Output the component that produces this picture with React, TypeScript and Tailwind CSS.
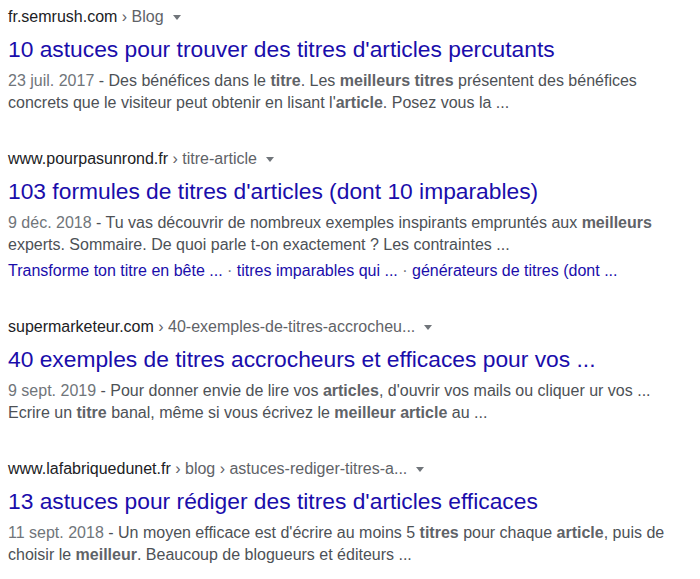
import React from "react";

type Part = string | { b: string };

type Result = {
  site: string;
  crumbs: string;
  title: string;
  date: string;
  lines: Part[][];
  links?: string[];
};

const results: Result[] = [
  {
    site: "fr.semrush.com",
    crumbs: " › Blog",
    title: "10 astuces pour trouver des titres d'articles percutants",
    date: "23 juil. 2017",
    lines: [
      [" - Des bénéfices dans le ", { b: "titre" }, ". Les ", { b: "meilleurs titres" }, " présentent des bénéfices"],
      ["concrets que le visiteur peut obtenir en lisant l'", { b: "article" }, ". Posez vous la ..."],
    ],
  },
  {
    site: "www.pourpasunrond.fr",
    crumbs: " › titre-article",
    title: "103 formules de titres d'articles (dont 10 imparables)",
    date: "9 déc. 2018",
    lines: [
      [" - Tu vas découvrir de nombreux exemples inspirants empruntés aux ", { b: "meilleurs" }],
      ["experts. Sommaire. De quoi parle t-on exactement ? Les contraintes ..."],
    ],
    links: ["Transforme ton titre en bête ...", "titres imparables qui ...", "générateurs de titres (dont ..."],
  },
  {
    site: "supermarketeur.com",
    crumbs: " › 40-exemples-de-titres-accrocheu...",
    title: "40 exemples de titres accrocheurs et efficaces pour vos ...",
    date: "9 sept. 2019",
    lines: [
      [" - Pour donner envie de lire vos ", { b: "articles" }, ", d'ouvrir vos mails ou cliquer ur vos ..."],
      ["Ecrire un ", { b: "titre" }, " banal, même si vous écrivez le ", { b: "meilleur article" }, " au ..."],
    ],
  },
  {
    site: "www.lafabriquedunet.fr",
    crumbs: " › blog › astuces-rediger-titres-a...",
    title: "13 astuces pour rédiger des titres d'articles efficaces",
    date: "11 sept. 2018",
    lines: [
      [" - Un moyen efficace est d'écrire au moins 5 ", { b: "titres" }, " pour chaque ", { b: "article" }, ", puis de"],
      ["choisir le ", { b: "meilleur" }, ". Beaucoup de blogueurs et éditeurs ..."],
    ],
  },
];

function Line({ parts }: { parts: Part[] }) {
  return (
    <>
      {parts.map((p, i) =>
        typeof p === "string" ? (
          <span key={i}>{p}</span>
        ) : (
          <b key={i} className="font-bold text-[#5f6368]">
            {p.b}
          </b>
        )
      )}
    </>
  );
}

function SearchResult({ r }: { r: Result }) {
  return (
    <div className="flex flex-col">
      <div className="flex items-center text-[16px] leading-[20px] h-[20px]">
        <span className="text-[#202124]">{r.site}</span>
        <span className="text-[#5f6368] whitespace-pre">{r.crumbs}</span>
        <span className="ml-[9px] mt-[1px] w-0 h-0 border-l-[4px] border-r-[4px] border-t-[5px] border-l-transparent border-r-transparent border-t-[#70757a]" />
      </div>
      <div className="mt-[8px] text-[22.8px] leading-[28px] text-[#1a0dab] whitespace-nowrap">{r.title}</div>
      <div className="mt-[7px] text-[16px] leading-[22px] text-[#4d5156]">
        {r.lines.map((ln, i) => (
          <div key={i} className="whitespace-nowrap">
            {i === 0 && <span className="text-[#70757a]">{r.date}</span>}
            <Line parts={ln} />
          </div>
        ))}
      </div>
      {r.links && (
        <div className="mt-[4px] text-[16px] leading-[22px] text-[#1a0dab] whitespace-nowrap">
          {r.links.map((l, i) => (
            <span key={i}>
              {i > 0 && <span className="text-[#70757a]"> · </span>}
              {l}
            </span>
          ))}
        </div>
      )}
    </div>
  );
}

export default function App() {
  return (
    <div className="w-[700px] h-[579px] bg-white overflow-hidden px-[8px] pt-[7px] font-['Liberation_Sans',Arial,sans-serif]">
      <div className="flex flex-col gap-[35px]">
        {results.map((r) => (
          <SearchResult key={r.site} r={r} />
        ))}
      </div>
    </div>
  );
}
